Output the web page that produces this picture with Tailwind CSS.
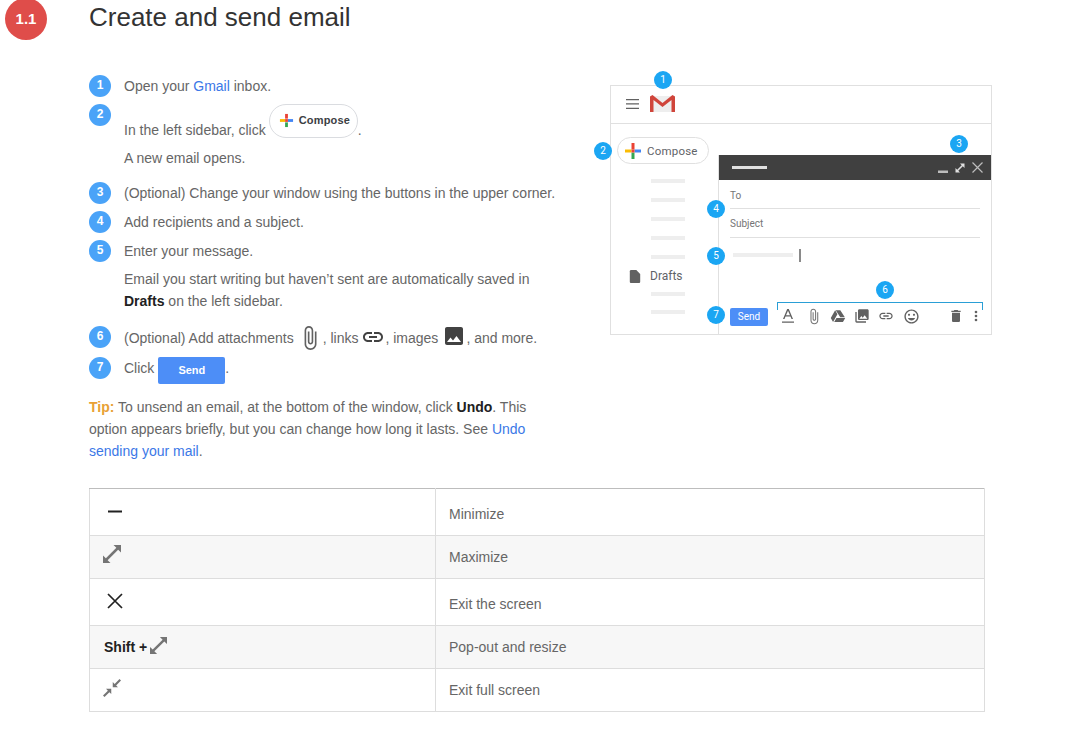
<!DOCTYPE html>
<html lang="en">
<head>
  <meta charset="UTF-8">
  <title>Create and send email</title>
  <script src="https://cdn.jsdelivr.net/npm/@tailwindcss/browser@4"></script>
</head>
<body class="bg-white font-['Liberation_Sans',Arial,sans-serif] text-[14px] leading-[22px] text-[#666666] overflow-hidden h-[731px]">
  <!-- Header -->
  <header class="flex items-center h-[38px] pl-[5px]">
    <div class="w-[42px] h-[42px] rounded-full bg-[#df4d4a] text-white font-bold text-[15px] flex items-center justify-center shrink-0">1.1</div>
    <h1 class="ml-[42px] -mt-[4px] text-[26px] leading-[34px] text-[#333333]">Create and send email</h1>
  </header>

  <div class="flex items-start pl-[89px] pt-[37px]">
    <!-- Steps -->
    <div class="w-[470px] shrink-0">
      <ol>
        <li class="flex gap-[13px] mb-[7px]">
          <span class="w-[22px] h-[22px] rounded-full bg-[#4aa3f8] text-white font-bold text-[12px] leading-[21px] text-center shrink-0">1</span>
          <p>Open your <a href="#" class="text-[#3b78e7]">Gmail</a> inbox.</p>
        </li>
        <li class="flex gap-[13px] mb-[13px]">
          <span class="w-[22px] h-[22px] rounded-full bg-[#4aa3f8] text-white font-bold text-[12px] leading-[21px] text-center shrink-0">2</span>
          <div>
            <p class="h-[34px] flex items-end">
              <span class="leading-[20px] -mb-[2px]">In the left sidebar, click</span>
              <span class="ml-[3px] w-[89px] h-[34px] rounded-[17px] border border-[#dadce0] bg-white flex items-center pl-[9px] pb-[2px] gap-[5px] text-[#3c4043] text-[11px] font-bold tracking-[0.2px]">
                <svg class="w-[15px] h-[15px] shrink-0" viewBox="0 0 16 16"><path fill="#ea4335" d="M6.5 1h3v5h-3z"/><path fill="#34a853" d="M6.5 10h3v5h-3z"/><path fill="#fbbc04" d="M1 6.5h5.500v3H1z"/><path fill="#4285f4" d="M9.500 6.500H15v3H9.500z"/><path fill="#ea4335" d="M6.500 6.500h3v3h-3z"/></svg>
                Compose
              </span>
              <span class="leading-[20px] -mb-[2px]">.</span>
            </p>
            <p class="mt-[9px]">A new email opens.</p>
          </div>
        </li>
        <li class="flex gap-[13px] mb-[7px]">
          <span class="w-[22px] h-[22px] rounded-full bg-[#4aa3f8] text-white font-bold text-[12px] leading-[21px] text-center shrink-0">3</span>
          <p>(Optional) Change your window using the buttons in the upper corner.</p>
        </li>
        <li class="flex gap-[13px] mb-[7px]">
          <span class="w-[22px] h-[22px] rounded-full bg-[#4aa3f8] text-white font-bold text-[12px] leading-[21px] text-center shrink-0">4</span>
          <p>Add recipients and a subject.</p>
        </li>
        <li class="flex gap-[13px] mb-[14px]">
          <span class="w-[22px] h-[22px] rounded-full bg-[#4aa3f8] text-white font-bold text-[12px] leading-[21px] text-center shrink-0">5</span>
          <div>
            <p>Enter your message.</p>
            <p class="mt-[6px] w-[420px]">Email you start writing but haven’t sent are automatically saved in <b class="text-[#212121]">Drafts</b> on the left sidebar.</p>
          </div>
        </li>
        <li class="flex gap-[13px] mb-[9px] h-[22px]">
          <span class="w-[22px] h-[22px] rounded-full bg-[#4aa3f8] text-white font-bold text-[12px] leading-[21px] text-center shrink-0">6</span>
          <p class="flex items-center h-[24px]">
            (Optional) Add attachments
            <svg class="w-[24px] h-[26px] ml-[4px] mr-[1px]" viewBox="2 0 20 24" fill="#616161"><path d="M16.500 6v11.500c0 2.210-1.790 4-4 4s-4-1.790-4-4V5c0-1.380 1.120-2.500 2.500-2.500s2.500 1.120 2.500 2.500v10.500c0 .55-.45 1-1 1s-1-.45-1-1V6H10v9.500c0 1.380 1.120 2.500 2.500 2.500s2.500-1.120 2.500-2.500V5c0-2.210-1.790-4-4-4S7 2.790 7 5v12.500c0 3.040 2.460 5.500 5.500 5.500s5.500-2.460 5.500-5.500V6h-1.500z"/></svg>
            , links
            <svg class="w-[24px] h-[24px] ml-[3px] -mt-[2px]" viewBox="0 0 24 24" fill="#424242"><path d="M3.900 12c0-1.710 1.390-3.100 3.100-3.100h4V7H7c-2.760 0-5 2.240-5 5s2.240 5 5 5h4v-1.900H7c-1.710 0-3.100-1.390-3.100-3.100zM8 13h8v-2H8v2zm9-6h-4v1.900h4c1.710 0 3.100 1.390 3.100 3.100s-1.390 3.100-3.100 3.100h-4V17h4c2.760 0 5-2.240 5-5s-2.240-5-5-5z"/></svg>
            , images
            <svg class="w-[24px] h-[24px] ml-[4px] -mt-[4px]" viewBox="0 0 24 24" fill="#424242"><path d="M21 19V5c0-1.100-.9-2-2-2H5c-1.100 0-2 .9-2 2v14c0 1.100.9 2 2 2h14c1.100 0 2-.9 2-2zM8.500 13.500l2.500 3.010L14.500 12l4.500 6H5l3.500-4.500z"/></svg>
            , and more.
          </p>
        </li>
        <li class="flex gap-[13px]">
          <span class="w-[22px] h-[22px] rounded-full bg-[#4aa3f8] text-white font-bold text-[12px] leading-[21px] text-center shrink-0">7</span>
          <p class="flex items-start">
            <span>Click</span>
            <span class="ml-[4px] w-[67px] h-[27px] rounded-[2px] bg-[#4d8ef7] text-white font-bold text-[11px] leading-[26px] text-center">Send</span>
            <span>.</span>
          </p>
        </li>
      </ol>
      <p class="mt-[12px] w-[450px]"><b class="text-[#e8a135]">Tip:</b> To unsend an email, at the bottom of the window, click <b class="text-[#212121]">Undo</b>. This option appears briefly, but you can change how long it lasts. See <a href="#" class="text-[#3b78e7]">Undo sending your mail</a>.</p>
    </div>

    <!-- Gmail illustration -->
    <figure class="relative ml-[51px] mt-[10px] w-[382px] h-[250px] border border-[#e0e0e0] font-['Roboto',sans-serif] flex flex-col shrink-0">
      <div class="h-[38px] border-b border-[#e0e0e0] flex items-center pl-[15px] pb-[2px] gap-[11px] shrink-0">
        <svg class="w-[13px] h-[10px]" viewBox="0 0 13 10" fill="#616161"><path d="M0 0h13v1.300H0zM0 4.300h13v1.300H0zM0 8.700h13V10H0z"/></svg>
        <svg class="w-[25px] h-[17px]" viewBox="0 0 25 17"><path fill="#eeeeee" d="M2 1h21v16H2z"/><path fill="#d0453b" d="M0 1.500 2.500 0 12.500 8 22.500 0 25 1.500V17h-3.500V5l-9 7-9-7V17H0z"/></svg>
      </div>
      <div class="flex flex-1 min-h-0">
        <aside class="w-[107px] shrink-0 flex flex-col items-start">
          <div class="ml-[6px] mt-[13px] w-[92px] h-[27px] shrink-0 rounded-[14px] border border-[#e0e0e0] bg-white flex items-center pl-[7px] gap-[6px] text-[11.500px] text-[#5f6368] tracking-[0.2px]">
            <svg class="w-[16px] h-[16px] shrink-0" viewBox="0 0 16 16"><path fill="#ea4335" d="M6.500 0h3v6.500h-3z"/><path fill="#34a853" d="M6.500 9.500h3V16h-3z"/><path fill="#fbbc04" d="M0 6.500h6.500v3H0z"/><path fill="#4285f4" d="M9.500 6.500H16v3H9.500z"/><path fill="#ea4335" d="M6.500 6.500h3v3h-3z"/></svg>
            Compose
          </div>
          <div class="ml-[40px] mt-[15px] flex flex-col gap-[15px]">
            <div class="w-[34px] h-[4px] bg-[#eeeeee]"></div>
            <div class="w-[34px] h-[4px] bg-[#eeeeee]"></div>
            <div class="w-[34px] h-[4px] bg-[#eeeeee]"></div>
            <div class="w-[34px] h-[4px] bg-[#eeeeee]"></div>
            <div class="w-[34px] h-[4px] bg-[#eeeeee]"></div>
          </div>
          <div class="ml-[18px] mt-[9px] flex items-center gap-[9px] text-[12px] leading-[16px] text-[#5f6368]">
            <svg class="w-[12px] h-[13px]" viewBox="4 2 16 20" fill="#616161"><path d="M14 2H6c-1.100 0-2 .9-2 2v16c0 1.100.9 2 2 2h12c1.100 0 2-.9 2-2V8l-6-6z"/></svg>
            Drafts
          </div>
          <div class="ml-[40px] mt-[8px] flex flex-col gap-[14px]">
            <div class="w-[34px] h-[4px] bg-[#eeeeee]"></div>
            <div class="w-[34px] h-[4px] bg-[#eeeeee]"></div>
          </div>
        </aside>
        <section class="flex-1 mt-[31px] border-l border-[#e0e0e0] flex flex-col min-w-0">
          <div class="h-[25px] bg-[#404040] flex items-center pl-[13px] pr-[8px] shrink-0">
            <div class="w-[35px] h-[3px] bg-[#e0e0e0]"></div>
            <svg class="ml-auto w-[10px] h-[10px]" viewBox="0 0 10 10" fill="#bdbdbd"><path d="M0 7.500h10V10H0z"/></svg>
            <svg class="ml-[6px] w-[12px] h-[12px]" viewBox="0 0 24 24" fill="#e0e0e0"><path d="M21 3h-9l3.400 3.400L6.400 15.400 3 12v9h9l-3.400-3.400 9-9L21 12z"/></svg>
            <svg class="ml-[6px] w-[11px] h-[11px]" viewBox="0 0 11 11" stroke="#bdbdbd" stroke-width="1.200"><path d="M.5.500l10 10M10.500.500l-10 10"/></svg>
          </div>
          <div class="ml-[11px] mr-[11px] h-[29px] border-b border-[#e0e0e0] text-[10px] leading-[28px] text-[#757575] shrink-0 pt-[2px]">To</div>
          <div class="ml-[11px] mr-[11px] h-[29px] border-b border-[#e0e0e0] text-[10px] leading-[28px] text-[#757575] shrink-0 pt-px">Subject</div>
          <div class="ml-[14px] mt-[10px] flex items-center h-[14px] shrink-0">
            <div class="w-[60px] h-[4px] bg-[#eeeeee]"></div>
            <div class="ml-[6px] w-[2px] h-[13px] bg-[#8a8a8a]"></div>
          </div>
          <div class="mt-[40px] ml-[11px] flex items-start shrink-0">
            <div class="mt-[6px] w-[38px] h-[18px] rounded-[2px] bg-[#4d8ef7] text-white text-[10px] leading-[18px] text-center">Send</div>
            <div class="ml-[9px] w-[206px] h-[8px] border-t border-x border-[#2a9fd6] relative">
              <div class="absolute left-0 top-[5px] w-full h-[18px] flex items-center text-[#616161]">
                <svg class="absolute left-[3px] top-0 w-[14px] h-[16px]" viewBox="0 0 14 16" fill="#616161"><path d="M6.200 1h1.600L12 11h-1.500l-1-2.500h-5L3.500 11H2zM5 7.300h4L7 2.800zM1 13.500h12v1.300H1z"/></svg>
                <svg class="absolute left-[28px] top-0 w-[16px] h-[17px]" viewBox="2 0 20 24" fill="#757575"><path d="M16.500 6v11.500c0 2.210-1.790 4-4 4s-4-1.790-4-4V5c0-1.380 1.120-2.500 2.500-2.500s2.500 1.120 2.500 2.500v10.500c0 .55-.45 1-1 1s-1-.45-1-1V6H10v9.500c0 1.380 1.120 2.500 2.500 2.500s2.500-1.120 2.500-2.500V5c0-2.210-1.790-4-4-4S7 2.790 7 5v12.500c0 3.040 2.460 5.500 5.500 5.500s5.500-2.460 5.500-5.500V6h-1.500z"/></svg>
                <svg class="absolute left-[52px] top-0 w-[16px] h-[16px]" viewBox="0 0 24 24" fill="#616161"><path d="M7.710 3.500L1.150 15l3.430 6 6.550-11.500L7.710 3.500zM9.730 15L6.300 21h13.120l3.430-6H9.730zm12.550-1L15.420 3.500H8.570L15.430 14h6.850z"/></svg>
                <svg class="absolute left-[76px] top-0 w-[16px] h-[16px]" viewBox="0 0 24 24" fill="#616161"><path d="M22 16V4c0-1.100-.9-2-2-2H8c-1.100 0-2 .9-2 2v12c0 1.100.9 2 2 2h12c1.100 0 2-.9 2-2zm-11-4l2.030 2.710L16 11l4 5H8l3-4zM2 6v14c0 1.100.9 2 2 2h14v-2H4V6H2z"/></svg>
                <svg class="absolute left-[100px] top-0 w-[16px] h-[16px]" viewBox="0 0 24 24" fill="#616161"><path d="M3.900 12c0-1.710 1.390-3.100 3.100-3.100h4V7H7c-2.760 0-5 2.240-5 5s2.240 5 5 5h4v-1.900H7c-1.710 0-3.100-1.390-3.100-3.100zM8 13h8v-2H8v2zm9-6h-4v1.900h4c1.710 0 3.100 1.390 3.100 3.100s-1.390 3.100-3.100 3.100h-4V17h4c2.760 0 5-2.240 5-5s-2.240-5-5-5z"/></svg>
                <svg class="absolute left-[125px] top-0 w-[17px] h-[17px]" viewBox="0 0 24 24" fill="#616161"><path d="M11.990 2C6.470 2 2 6.480 2 12s4.470 10 9.990 10C17.520 22 22 17.520 22 12S17.520 2 11.990 2zM12 20c-4.420 0-8-3.580-8-8s3.580-8 8-8 8 3.580 8 8-3.580 8-8 8zm3.500-9c.83 0 1.500-.67 1.500-1.500S16.330 8 15.500 8 14 8.670 14 9.500s.67 1.500 1.500 1.500zm-7 0c.83 0 1.500-.67 1.500-1.500S9.330 8 8.500 8 7 8.670 7 9.500 7.670 11 8.500 11zm3.500 6.500c2.330 0 4.310-1.460 5.110-3.500H6.890c.8 2.040 2.780 3.500 5.110 3.500z"/></svg>
                <svg class="absolute left-[170px] top-0 w-[16px] h-[16px]" viewBox="0 0 24 24" fill="#616161"><path d="M6 19c0 1.100.9 2 2 2h8c1.100 0 2-.9 2-2V7H6v12zM19 4h-3.500l-1-1h-5l-1 1H5v2h14V4z"/></svg>
                <svg class="absolute left-[190px] top-0 w-[16px] h-[16px]" viewBox="0 0 24 24" fill="#616161"><circle cx="12" cy="6" r="2"/><circle cx="12" cy="12" r="2"/><circle cx="12" cy="18" r="2"/></svg>
              </div>
            </div>
          </div>
        </section>
      </div>
      <!-- callouts -->
      <span class="absolute left-[43px] top-[-15px] w-[18px] h-[18px] rounded-full bg-[#1ba6f3] text-white text-[10px] leading-[18px] text-center">1</span>
      <span class="absolute left-[-17px] top-[56px] w-[18px] h-[18px] rounded-full bg-[#1ba6f3] text-white text-[10px] leading-[18px] text-center">2</span>
      <span class="absolute left-[339px] top-[49px] w-[18px] h-[18px] rounded-full bg-[#1ba6f3] text-white text-[10px] leading-[18px] text-center">3</span>
      <span class="absolute left-[96px] top-[114px] w-[18px] h-[18px] rounded-full bg-[#1ba6f3] text-white text-[10px] leading-[18px] text-center">4</span>
      <span class="absolute left-[96px] top-[161px] w-[18px] h-[18px] rounded-full bg-[#1ba6f3] text-white text-[10px] leading-[18px] text-center">5</span>
      <span class="absolute left-[265px] top-[195px] w-[18px] h-[18px] rounded-full bg-[#1ba6f3] text-white text-[10px] leading-[18px] text-center">6</span>
      <span class="absolute left-[96px] top-[220px] w-[18px] h-[18px] rounded-full bg-[#1ba6f3] text-white text-[10px] leading-[18px] text-center">7</span>
    </figure>
  </div>

  <!-- Button reference table -->
  <table class="absolute left-[89px] top-[488px] w-[896px] border-collapse table-fixed">
    <tbody>
      <tr class="h-[47px]">
        <td class="w-[346px] border border-[#dddddd] border-t-[#bdbdbd] pl-[14px] align-top pt-[11px]">
          <svg class="w-[24px] h-[24px]" viewBox="0 0 24 24" fill="#212121"><path d="M4 10.500h14v2H4z"/></svg>
        </td>
        <td class="border border-[#dddddd] border-t-[#bdbdbd] pl-[13px] align-bottom pb-[10px]">Minimize</td>
      </tr>
      <tr class="h-[43px] bg-[#f7f7f7]">
        <td class="border border-[#dddddd] pl-[13px] align-top pt-[9px]">
          <svg class="w-[18px] h-[18px]" viewBox="0 0 24 24" fill="#757575"><path d="M24 0H14l3.800 3.800L3.800 17.800 0 14v10h10l-3.800-3.800 14-14L24 10z"/></svg>
        </td>
        <td class="border border-[#dddddd] pl-[13px] align-bottom pb-[10px]">Maximize</td>
      </tr>
      <tr class="h-[47px]">
        <td class="border border-[#dddddd] pl-[17px] align-top pt-[14px]">
          <svg class="w-[16px] h-[16px]" viewBox="0 0 16 16" stroke="#212121" stroke-width="1.700"><path d="M1 1l14 14M15 1L1 15"/></svg>
        </td>
        <td class="border border-[#dddddd] pl-[13px] align-bottom pb-[10px]">Exit the screen</td>
      </tr>
      <tr class="h-[43px] bg-[#f7f7f7]">
        <td class="border border-[#dddddd] pl-[14px] align-bottom pb-[10px]">
          <div class="flex items-end">
            <b class="text-[#212121]">Shift +</b>
            <svg class="ml-[3px] mb-[4px] w-[17px] h-[17px]" viewBox="0 0 24 24" fill="#757575"><path d="M24 0H14l3.800 3.800L3.800 17.800 0 14v10h10l-3.800-3.800 14-14L24 10z"/></svg>
          </div>
        </td>
        <td class="border border-[#dddddd] pl-[13px] align-bottom pb-[10px]">Pop-out and resize</td>
      </tr>
      <tr class="h-[43px]">
        <td class="border border-[#dddddd] pl-[13px] align-top pt-[10px]">
          <svg class="w-[18px] h-[18px]" viewBox="0 0 24 24" fill="#757575"><path d="M11 13v7l-2.500-2.500L2 24l-2-2 6.500-6.500L4 13zM13 11V4l2.500 2.500L22 0l2 2-6.500 6.500L20 11z"/></svg>
        </td>
        <td class="border border-[#dddddd] pl-[13px] align-bottom pb-[10px]">Exit full screen</td>
      </tr>
    </tbody>
  </table>
</body>
</html>
